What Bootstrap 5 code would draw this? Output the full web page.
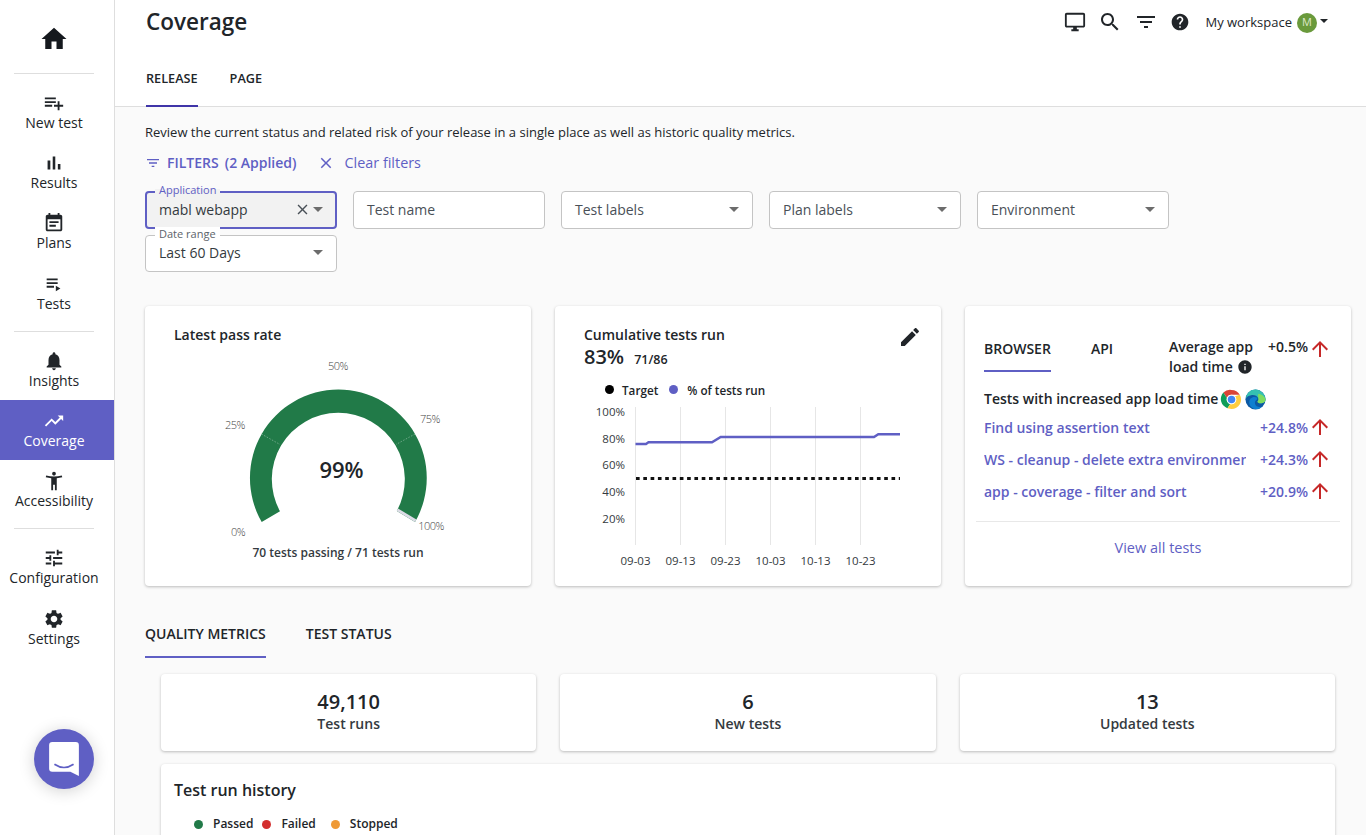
<!DOCTYPE html>
<html lang="en"><head><meta charset="utf-8"><title>Coverage</title>
<link href="https://cdn.jsdelivr.net/npm/bootstrap@5.3.0/dist/css/bootstrap.min.css" rel="stylesheet">
<style>
html,body{height:100%;overflow:hidden}
body{font-family:"Open Sans","Liberation Sans",sans-serif;color:#212529;font-size:13px;background:#fafafa}
svg.i{fill:currentColor;display:block}
.app{height:835px}
.side{width:115px;flex:none;background:#fff;border-right:1px solid #dedede;color:#1b1f24}
.home{height:73px;display:flex;align-items:center;justify-content:center;padding:4px 6px 0 0;color:#15191e}
.side hr{margin:0 0 0 14px;width:80px;border-color:#dedede;opacity:1}
.side .grp{padding:8px 0}
.nav-it{height:60px;display:flex;flex-direction:column;align-items:center;padding:10px 6px 0 0;font-size:14px;line-height:19px;color:#212529;text-decoration:none}
.nav-it+.nav-it.lo{margin-top:1px}
.nav-it svg{height:22px;width:22px;flex:none;margin-bottom:-1px}
.nav-it.on{background:#5f5fc4;color:#fff}
.chat{position:fixed;left:34px;top:729px;width:60px;height:60px;border-radius:50%;background:#5f5fc4;box-shadow:0 2px 16px rgba(0,0,0,.18);display:flex;align-items:center;justify-content:center}
.main{min-width:0;flex:1}
.top{background:#fff;height:107px;border-bottom:1px solid #dedede;padding:0 38px 0 31px}
.top h1{font-size:22.5px;font-weight:600;margin:0;line-height:44px;color:#212529}
.head{height:44px}
.hicons{gap:12px;color:#212529}
.ws{font-size:13px;margin-left:3px;padding-top:1px}
.ava{width:20px;height:20px;border-radius:50%;background:#6a9a3c;color:#dfe9c8;font-size:11px;display:flex;align-items:center;justify-content:center;margin-left:5px}
.caret{width:0;height:0;border:4px solid transparent;border-top-color:#212529;border-bottom:0;margin:0 0 4px 3px}
.tabs{gap:32px;padding-top:18px}
.tabs a{display:block;text-decoration:none;color:#212529;font-weight:600;font-size:12.7px;height:45px;line-height:32px}
.tabs a.on{border-bottom:2px solid #3f35a8}
.body{padding:16px 15px 0 30px}
.intro{font-size:13px;line-height:18px;margin:0}
.filters{color:#5f5fc4;font-size:14px;font-weight:600;margin-top:12px;line-height:20px}
.filters .clr{font-weight:500;font-size:14.4px}
.fgrid{display:flex;flex-wrap:wrap;gap:6px 16px;margin-top:18px;height:80px}
.fld{position:relative;width:192px;height:38px;border:1px solid #c4c4c4;border-radius:4px;background:#fff;display:flex;align-items:center;padding:0 13px 2px;font-size:14px;color:#495057}
.fld .val{flex:1;color:#343a40;white-space:nowrap}
.fld .hint{color:#495057}
.fld .lab{position:absolute;left:9px;top:-9px;background:#fff;padding:0 4px;font-size:11px;line-height:13px;color:#5c636a}
.fld.act{border:2px solid #5f5fc4;background:#f2f2f2;padding:0 12px 2px}
.fld.act .lab{color:#5f5fc4;top:-10px;left:8px;background:linear-gradient(#fafafa 50%,#f2f2f2 50%)}
.fld.dr{height:37px}
.arr{width:0;height:0;border:5px solid transparent;border-top:5px solid #6c6c6c;border-bottom:0}
.cards{display:grid;grid-template-columns:repeat(3,386px);gap:24px;margin-top:35px}
.wcard{border:0;border-radius:4px;box-shadow:0 1px 3px rgba(0,0,0,.25);background:#fff}
.c3{height:280px}
.ttl{font-size:14px;font-weight:600;line-height:20px;color:#212529}
.gauge{display:block;margin-top:5px}
.gauge .tk{opacity:.99}
.pass{padding:19px 0 0 29px}
.c2 .pct{font-size:20px;font-weight:600;line-height:24px}
.c2 .frac{font-size:12.5px;font-weight:600;margin-left:10px}
.leg{font-size:11.7px;font-weight:600;line-height:16px}
.dot{display:inline-block;width:9px;height:9px;border-radius:50%;flex:none}
.btab{font-size:14px;font-weight:600;line-height:20px}
.btab.on{border-bottom:2.5px solid #5f5fc4;height:33px;margin-top:10px;width:67px}
.rise{font-size:14px;font-weight:600;color:#5f5fc4;text-decoration:none}
.row-l{height:32px;display:flex;align-items:center;justify-content:space-between}
.row-l .rise.nm{width:262px;overflow:hidden;white-space:nowrap}
.red{color:#c62828}
.vat{border-top:1px solid #e8e8e8;margin:14px -8px 0;text-align:center;padding-top:15px;font-size:14.5px;color:#5f5fc4}
.qtabs{gap:40px;margin-top:33px}
.qtabs a{display:block;color:#212529;text-decoration:none;font-size:14px;font-weight:600;height:39px;line-height:30px}
.qtabs a.on{border-bottom:2px solid #5f5fc4}
.stats{display:grid;grid-template-columns:repeat(3,1fr);gap:24px;margin:16px 0 0 16px;width:1174px}
.stat{height:77px;text-align:center;padding-top:16px}
.stat b{display:block;font-size:20px;font-weight:600;line-height:24px}
.stat span{display:block;font-size:14px;font-weight:600;line-height:20px;color:#343a40}
.hist{margin:13px 0 0 16px;width:1174px;height:200px;padding:15px 13px}
.hist .t{font-size:16px;font-weight:600;line-height:22px}
.hist .leg{margin:15px 0 0 20px;font-size:12px}
.hist .leg span+span{margin-left:10px}
.hist .leg span+.dot{margin-left:9px}
.hist .leg span+.dot.st{margin-left:15px}
</style></head><body>
<svg width="0" height="0" class="position-absolute"><defs>
<symbol id="home" viewBox="0 0 24 24"><path d="M10 20v-6h4v6h5v-8h3L12 3 2 12h3v8z"/></symbol>
<symbol id="padd" viewBox="0 0 24 24"><path d="M14 10H2v2h12v-2zm0-4H2v2h12V6zm4 8v-4h-2v4h-4v2h4v4h2v-4h4v-2h-4zM2 16h8v-2H2v2z"/></symbol>
<symbol id="bars" viewBox="0 0 24 24"><path d="M5 9.2h3V19H5zM10.6 5h2.800v14h-2.800zm5.600 8H19v6h-2.800z"/></symbol>
<symbol id="event" viewBox="0 0 24 24"><path d="M17 10H7v2h10v-2zm2-7h-1V1h-2v2H8V1H6v2H5c-1.110 0-1.990.9-1.990 2L3 19c0 1.100.89 2 2 2h14c1.100 0 2-.9 2-2V5c0-1.100-.9-2-2-2zm0 16H5V8h14v11zm-5-5H7v2h7v-2z"/></symbol>
<symbol id="pplay" viewBox="0 0 24 24"><path d="M4 10h12v2H4zm0-4h12v2H4zm0 8h8v2H4zm10 0v6l5-3z"/></symbol>
<symbol id="bell" viewBox="0 0 24 24"><path d="M12 22c1.100 0 2-.9 2-2h-4c0 1.100.89 2 2 2zm6-6v-5c0-3.070-1.640-5.640-4.500-6.320V4c0-.83-.67-1.500-1.500-1.500s-1.500.67-1.500 1.500v.68C7.630 5.360 6 7.920 6 11v5l-2 2v1h16v-1l-2-2z"/></symbol>
<symbol id="trend" viewBox="0 0 24 24"><path d="M16 6l2.290 2.290-4.880 4.880-4-4L2 16.590 3.410 18l6-6 4 4 6.300-6.290L22 12V6z"/></symbol>
<symbol id="acc" viewBox="0 0 24 24"><path d="M20.500 6c-2.610.7-5.670 1-8.500 1s-5.890-.3-8.500-1L3 8c1.860.5 4 .83 6 1v13h2v-6h2v6h2V9c2-.17 4.140-.5 6-1l-.5-2zM12 6c1.100 0 2-.9 2-2s-.9-2-2-2-2 .9-2 2 .9 2 2 2z"/></symbol>
<symbol id="tune" viewBox="0 0 24 24"><path d="M3 17v2h6v-2H3zM3 5v2h10V5H3zm10 16v-2h8v-2h-8v-2h-2v6h2zM7 9v2H3v2h4v2h2V9H7zm14 4v-2H11v2h10zm-6-4h2V7h4V5h-4V3h-2v6z"/></symbol>
<symbol id="gear" viewBox="0 0 24 24"><path d="M19.140 12.940c.04-.3.06-.61.06-.94 0-.32-.02-.64-.07-.94l2.030-1.580c.18-.14.23-.41.12-.61l-1.920-3.320c-.12-.22-.37-.29-.59-.22l-2.390.96c-.5-.38-1.030-.7-1.620-.94l-.36-2.540c-.04-.24-.24-.41-.48-.41h-3.840c-.24 0-.43.17-.47.41l-.36 2.540c-.59.24-1.130.57-1.620.94l-2.390-.96c-.22-.08-.47 0-.59.22L2.740 8.870c-.12.21-.08.47.12.61l2.030 1.580c-.05.3-.09.63-.09.94s.02.64.07.94l-2.030 1.580c-.18.14-.23.41-.12.61l1.920 3.320c.12.22.37.29.59.22l2.390-.96c.5.38 1.030.7 1.620.94l.36 2.540c.05.24.24.41.48.41h3.840c.24 0 .44-.17.47-.41l.36-2.540c.59-.24 1.130-.56 1.620-.94l2.390.96c.22.08.47 0 .59-.22l1.920-3.320c.12-.22.07-.47-.12-.61l-2.010-1.580zM12 15.600c-1.980 0-3.600-1.620-3.600-3.600s1.620-3.600 3.600-3.600 3.600 1.620 3.600 3.600-1.620 3.600-3.600 3.600z"/></symbol>
<symbol id="desk" viewBox="0 0 24 24"><path d="M21 2H3c-1.100 0-2 .9-2 2v12c0 1.100.9 2 2 2h7v2H8v2h8v-2h-2v-2h7c1.100 0 2-.9 2-2V4c0-1.100-.9-2-2-2zm0 14H3V4h18v12z"/></symbol>
<symbol id="search" viewBox="0 0 24 24"><path d="M15.500 14h-.79l-.28-.27C15.410 12.590 16 11.110 16 9.500 16 5.910 13.090 3 9.500 3S3 5.910 3 9.500 5.910 16 9.500 16c1.610 0 3.090-.59 4.230-1.570l.27.28v.79l5 4.990L20.490 19l-4.990-5zm-6 0C7.010 14 5 11.990 5 9.500S7.010 5 9.500 5 14 7.010 14 9.500 11.990 14 9.500 14z"/></symbol>
<symbol id="filter" viewBox="0 0 24 24"><path d="M10 18h4v-2h-4v2zM3 6v2h18V6H3zm3 7h12v-2H6v2z"/></symbol>
<symbol id="help" viewBox="0 0 24 24"><path d="M12 2C6.480 2 2 6.480 2 12s4.480 10 10 10 10-4.480 10-10S17.520 2 12 2zm1 17h-2v-2h2v2zm2.070-7.750l-.9.92C13.450 12.900 13 13.500 13 15h-2v-.5c0-1.100.45-2.100 1.170-2.830l1.240-1.260c.37-.36.59-.86.59-1.410 0-1.100-.9-2-2-2s-2 .9-2 2H8c0-2.210 1.790-4 4-4s4 1.790 4 4c0 .88-.36 1.680-.93 2.250z"/></symbol>
<symbol id="close" viewBox="0 0 24 24"><path d="M19 6.410L17.590 5 12 10.590 6.410 5 5 6.410 10.590 12 5 17.590 6.410 19 12 13.410 17.590 19 19 17.590 13.410 12z"/></symbol>
<symbol id="edit" viewBox="0 0 24 24"><path d="M3 17.250V21h3.750L17.810 9.940l-3.750-3.750L3 17.250zM20.710 7.040c.39-.39.39-1.020 0-1.410l-2.340-2.340c-.39-.39-1.020-.39-1.410 0l-1.830 1.830 3.750 3.750 1.830-1.830z"/></symbol>
<symbol id="info" viewBox="0 0 24 24"><path d="M12 2C6.480 2 2 6.480 2 12s4.480 10 10 10 10-4.480 10-10S17.520 2 12 2zm1 15h-2v-6h2v6zm0-8h-2V7h2v2z"/></symbol>
<symbol id="up" viewBox="0 0 24 24"><path d="M4 12l1.410 1.410L11 7.830V20h2V7.830l5.580 5.590L20 12l-8-8-8 8z"/></symbol>
</defs></svg>

<div class="app d-flex">
<nav class="side">
  <div class="home"><svg class="i" width="30" height="30"><use href="#home"/></svg></div>
  <hr>
  <div class="grp">
    <a class="nav-it" href="#"><svg class="i"><use href="#padd"/></svg>New test</a>
    <a class="nav-it" href="#"><svg class="i"><use href="#bars"/></svg>Results</a>
    <a class="nav-it" href="#"><svg class="i"><use href="#event"/></svg>Plans</a>
    <a class="nav-it lo" href="#"><svg class="i"><use href="#pplay"/></svg>Tests</a>
  </div>
  <hr>
  <div class="grp">
    <a class="nav-it" href="#"><svg class="i"><use href="#bell"/></svg>Insights</a>
    <a class="nav-it on" href="#"><svg class="i"><use href="#trend"/></svg>Coverage</a>
    <a class="nav-it" href="#"><svg class="i"><use href="#acc"/></svg>Accessibility</a>
  </div>
  <hr>
  <div class="grp">
    <a class="nav-it" href="#"><svg class="i"><use href="#tune"/></svg>Configuration</a>
    <a class="nav-it lo" href="#"><svg class="i"><use href="#gear"/></svg>Settings</a>
  </div>
</nav>
<div class="chat"><svg width="30" height="34" viewBox="0 0 28 32"><path d="M3 0h22a3 3 0 0 1 3 3v29l-8-4H3a3 3 0 0 1-3-3V3a3 3 0 0 1 3-3z" fill="#fff"/><path d="M5 21q9 6 18 0" fill="none" stroke="#5f5fc4" stroke-width="1.6"/></svg></div>

<main class="main">
  <header class="top">
    <div class="head d-flex align-items-center justify-content-between">
      <h1>Coverage</h1>
      <div class="d-flex align-items-center hicons">
        <svg class="i" width="22" height="22"><use href="#desk"/></svg>
        <svg class="i" width="24" height="24"><use href="#search"/></svg>
        <svg class="i" width="24" height="24"><use href="#filter"/></svg>
        <svg class="i" width="20" height="20"><use href="#help"/></svg>
        <div class="d-flex align-items-center ws">My workspace<span class="ava">M</span><span class="caret"></span></div>
      </div>
    </div>
    <div class="d-flex tabs"><a class="on" href="#">RELEASE</a><a href="#">PAGE</a></div>
  </header>
  <div class="body">
    <p class="intro">Review the current status and related risk of your release in a single place as well as historic quality metrics.</p>
    <div class="d-flex align-items-center filters">
      <svg class="i" width="16" height="16" style="margin-right:6px"><use href="#filter"/></svg><span>FILTERS</span><span style="margin-left:6px">(2 Applied)</span>
      <svg class="i" width="18" height="18" style="margin:0 10px 0 20px"><use href="#close"/></svg><span class="clr">Clear filters</span>
    </div>
    <div class="fgrid">
      <div class="fld act"><span class="lab">Application</span><span class="val">mabl webapp</span><svg class="i" width="17" height="17" style="margin-right:2px"><use href="#close"/></svg><span class="arr"></span></div>
      <div class="fld"><span class="val hint">Test name</span></div>
      <div class="fld"><span class="val hint">Test labels</span><span class="arr"></span></div>
      <div class="fld"><span class="val hint">Plan labels</span><span class="arr"></span></div>
      <div class="fld"><span class="val hint">Environment</span><span class="arr"></span></div>
      <div class="fld dr"><span class="lab">Date range</span><span class="val">Last 60 Days</span><span class="arr"></span></div>
    </div>

    <div class="cards">
      <section class="card wcard c3">
        <div class="ttl pass">Latest pass rate</div>
        <svg class="gauge" width="386" height="230" viewBox="145 350 386 230">
          <path d="M261.700 522 A88.400 88.400 0 1 1 415 522 L396.800 511 A66.500 66.500 0 1 0 280 511.300Z" fill="#217a48"/>
          <path d="M398 508.500 L396.800 511 L415 522 L416.400 519.600Z" fill="#dcdce6"/>
          <path d="M261.500 434 L280 444.500M415 434 L396 444.500" stroke="#8db9a0" stroke-width=".7" stroke-dasharray="1.500 1.500"/>
          <g class="tk" font-size="11" fill="#444" font-weight="300" text-anchor="middle" letter-spacing="-.5">
            <text x="338" y="370">50%</text><text x="235" y="429">25%</text><text x="430" y="423">75%</text><text x="238" y="536">0%</text><text x="431" y="530">100%</text>
          </g>
          <text x="341.500" y="478" text-anchor="middle" font-size="22" font-weight="600" fill="#212529">99%</text>
          <text x="338" y="557" text-anchor="middle" font-size="12" font-weight="600" fill="#343a40">70 tests passing / 71 tests run</text>
        </svg>
      </section>

      <section class="card wcard c3 c2">
        <div class="d-flex justify-content-between" style="padding:19px 19px 0 29px">
          <div><div class="ttl">Cumulative tests run</div><div class="d-flex align-items-baseline"><span class="pct">83%</span><span class="frac">71/86</span></div></div>
          <svg class="i" width="24" height="24"><use href="#edit"/></svg>
        </div>
        <div class="d-flex align-items-center leg" style="margin:12px 0 0 50px">
          <span class="dot bg-black"></span><span style="margin-left:8px">Target</span>
          <span class="dot" style="background:#5f5fc4;margin-left:11px"></span><span style="margin-left:9px">% of tests run</span>
        </div>
        <svg width="386" height="180" viewBox="555 400 386 180" class="d-block" style="margin-top:2px">
          <g stroke="#e6e6e6"><path d="M635.500 407V545M680.500 407V545M725.500 407V545M770.500 407V545M815.500 407V545M860.500 407V545"/></g>
          <path d="M636 478.500H900" stroke="#111" stroke-width="3" stroke-dasharray="3.650 3.650"/>
          <path d="M635.500 444H646L648.500 442.300H712L720.700 437H874L878.300 434.300H900" fill="none" stroke="#5f5fc4" stroke-width="2.500"/>
          <g font-size="11.500" font-weight="500" fill="#343a40" text-anchor="end">
            <text x="625" y="416">100%</text><text x="625" y="443">80%</text><text x="625" y="469">60%</text><text x="625" y="496">40%</text><text x="625" y="523">20%</text>
          </g>
          <g font-size="11.500" font-weight="500" fill="#343a40" text-anchor="middle">
            <text x="635.500" y="565">09-03</text><text x="680.500" y="565">09-13</text><text x="725.500" y="565">09-23</text><text x="770.500" y="565">10-03</text><text x="815.500" y="565">10-13</text><text x="860.500" y="565">10-23</text>
          </g>
        </svg>
      </section>

      <section class="card wcard c3" style="padding:23px 19px 0 19px">
        <div class="d-flex" style="height:50px">
          <div class="btab on">BROWSER</div>
          <div class="btab" style="margin:10px 0 0 40px;width:78px">API</div>
          <div class="btab" style="margin-top:8px;width:99px">Average app<div class="d-flex align-items-center">load time<svg class="i ms-1" width="16" height="16"><use href="#info"/></svg></div></div>
          <div class="d-flex align-items-start flex-fill justify-content-end btab" style="white-space:nowrap;margin-top:8px">+0.5%<svg class="i red" width="24" height="24"><use href="#up"/></svg></div>
        </div>
        <div class="d-flex align-items-center ttl" style="margin-top:8px;height:24px">Tests with increased app load time
          <svg width="23" height="23" viewBox="0 0 48 48" style="margin-left:2px"><path d="M24 4a20 20 0 0 1 17.300 10H24a10 10 0 0 0-9.600 7L7 9.500A20 20 0 0 1 24 4z" fill="#db4437"/><path d="M7 9.500l7.400 11.500a10 10 0 0 0 7 12.600L15.500 42A20 20 0 0 1 7 9.500z" fill="#0f9d58"/><path d="M41.300 14A20 20 0 0 1 24 44l-8.500-2 6-8.400A10 10 0 0 0 31 17z" fill="#ffcd40"/><circle cx="24" cy="24" r="10" fill="#fff"/><circle cx="24" cy="24" r="7.800" fill="#4285f4"/></svg>
          <svg width="23" height="23" viewBox="0 0 48 48" style="margin-left:1px"><circle cx="24" cy="24" r="21" fill="#0c59a4"/><path d="M4 22C5 10 14 3 24 3c11 0 20 9 21 21 0 5-5 8-10 8-4 0-7-2-7-4 2-1 3-3 2-6-2-6-9-8-15-7-6 1-10 4-11 7z" fill="#35c1b1"/><path d="M30 12c7 1 14 6 15 12 0 5-5 8-10 8-3 0-6-1-7-4 2-2 3-4 2-7-1-3-1-6 0-9z" fill="#7fdc5f"/><path d="M22 19c-7 0-11 5-11 11 0 7 6 13 14 14 4 0 9-1 12-5-5 2-13 0-14-6-1-4 1-7 4-9 2-2 0-5-5-5z" fill="#0f7fd0"/></svg>
        </div>
        <div>
          <div class="row-l"><a class="rise nm" href="#">Find using assertion text</a><span class="rise d-flex align-items-center">+24.8%<svg class="i red" width="24" height="24"><use href="#up"/></svg></span></div>
          <div class="row-l"><a class="rise nm" href="#">WS - cleanup - delete extra environments</a><span class="rise d-flex align-items-center">+24.3%<svg class="i red" width="24" height="24"><use href="#up"/></svg></span></div>
          <div class="row-l"><a class="rise nm" href="#">app - coverage - filter and sort</a><span class="rise d-flex align-items-center">+20.9%<svg class="i red" width="24" height="24"><use href="#up"/></svg></span></div>
        </div>
        <div class="vat">View all tests</div>
      </section>
    </div>

    <div class="d-flex qtabs"><a class="on" href="#">QUALITY METRICS</a><a href="#">TEST STATUS</a></div>
    <div class="stats">
      <div class="card wcard stat"><b>49,110</b><span>Test runs</span></div>
      <div class="card wcard stat"><b>6</b><span>New tests</span></div>
      <div class="card wcard stat"><b>13</b><span>Updated tests</span></div>
    </div>
    <section class="card wcard hist">
      <div class="t">Test run history</div>
      <div class="d-flex align-items-center leg">
        <span class="dot" style="background:#217a48"></span><span>Passed</span>
        <span class="dot" style="background:#d32f2f"></span><span>Failed</span>
        <span class="dot st" style="background:#ef9a37"></span><span>Stopped</span>
      </div>
    </section>
  </div>
</main>
</div>
<script src="https://cdn.jsdelivr.net/npm/bootstrap@5.3.0/dist/js/bootstrap.bundle.min.js"></script>
</body></html>
